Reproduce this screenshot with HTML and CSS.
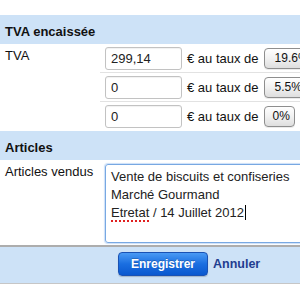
FILE: index.html
```html
<!DOCTYPE html>
<html lang="fr">
<head>
  <meta charset="UTF-8">
  <title>TVA encaissée</title>
  <link rel="stylesheet" href="styles.css">
</head>
<body>
  <form class="form">
    <div class="legend">TVA encaissée</div>
    <div class="row">
      <label class="label">TVA</label>
      <div class="fields">
        <div class="line">
          <input class="amount" type="text" value="299,14">
          <span class="unit">€ au taux de</span>
          <span class="rate">19.6%</span>
        </div>
        <div class="line">
          <input class="amount" type="text" value="0">
          <span class="unit">€ au taux de</span>
          <span class="rate">5.5%</span>
        </div>
        <div class="line">
          <input class="amount" type="text" value="0">
          <span class="unit">€ au taux de</span>
          <span class="rate rate-small">0%</span>
        </div>
      </div>
    </div>
    <div class="legend">Articles</div>
    <div class="row">
      <label class="label">Articles vendus</label>
      <div class="fields fields-text">
        <div class="textarea">Vente de biscuits et confiseries<br>Marché Gourmand<br><span class="typo">Etretat</span> / 14 Juillet 2012<span class="caret"></span></div>
      </div>
    </div>
    <div class="actions">
      <button type="button" class="save">Enregistrer</button>
      <a class="cancel" href="#">Annuler</a>
    </div>
  </form>
</body>
</html>
```

FILE: styles.css
```css
html,
body {
  overflow: hidden;
}

body {
  margin: 0;
  padding-top: 15px;
  background: #fff;
  color: #111;
  font-family: "Liberation Sans", Arial, sans-serif;
  font-size: 13px;
}

.form {
  width: 340px;
}

.legend {
  height: 29px;
  box-sizing: border-box;
  padding: 9px 5px 0;
  line-height: 15px;
  font-weight: bold;
  background: #cde2f7;
}

.row {
  display: flex;
}

.label {
  width: 100px;
  box-sizing: border-box;
  padding: 4px 5px 0;
  line-height: 15px;
}

.fields {
  flex: 1;
}

.line {
  display: flex;
  align-items: center;
  gap: 5px;
  height: 29px;
  box-sizing: border-box;
  padding: 3px 0 2px 5px;
  border-bottom: 1px solid #e2e2e2;
}

.line:last-child {
  border-bottom-color: transparent;
}

.amount {
  width: 77px;
  height: 23px;
  box-sizing: border-box;
  margin: 0;
  padding: 0 5px;
  border: 1px solid #c2c2c2;
  border-radius: 3px;
  box-shadow: inset 0 1px 1px rgba(0, 0, 0, 0.06);
  font: 13px "Liberation Sans", Arial, sans-serif;
  color: #222;
  outline: none;
}

.unit {
  white-space: nowrap;
}

.rate {
  flex: none;
  width: 60px;
  height: 21px;
  box-sizing: border-box;
  padding-left: 10px;
  border: 1px solid #8e8e8e;
  border-radius: 4px;
  background: linear-gradient(#ffffff, #f1f1f1 50%, #dedede);
  box-shadow: 0 1px 0 rgba(0, 0, 0, 0.08);
  font-size: 12px;
  line-height: 19px;
  color: #111;
  white-space: nowrap;
  overflow: hidden;
}

.rate-small {
  width: 31px;
  padding-left: 8px;
}

.fields-text {
  padding: 4px 0 2px 5px;
}

.textarea {
  width: 230px;
  height: 79px;
  box-sizing: border-box;
  padding: 3px 5px;
  border: 1px solid #78a8e2;
  border-radius: 3px;
  box-shadow: 0 0 1px 1px rgba(140, 185, 240, 0.45);
  line-height: 18px;
  color: #222;
  white-space: nowrap;
}

.typo {
  border-bottom: 2px dotted #e02020;
}

.caret {
  display: inline-block;
  width: 1px;
  height: 15px;
  margin-left: 1px;
  vertical-align: -3px;
  background: #000;
}

.actions {
  display: flex;
  align-items: center;
  gap: 5px;
  padding: 5px 0 7px 118px;
  background: #cde2f7;
  border-top: 2px solid #adadad;
  border-bottom: 1px solid #c6c6c6;
}

.save {
  width: 90px;
  height: 24px;
  margin: 0;
  padding: 0;
  border: 1px solid #1a52b4;
  border-radius: 4px;
  background: linear-gradient(#4a9af4, #1a6ee0 50%, #0a58cf);
  box-shadow: 0 1px 1px rgba(0, 0, 0, 0.2);
  color: #fff;
  font: bold 12px "Liberation Sans", Arial, sans-serif;
  text-shadow: 0 -1px 0 rgba(0, 0, 0, 0.2);
  cursor: pointer;
}

.cancel {
  color: #1f3d90;
  font-size: 12.5px;
  font-weight: bold;
  text-decoration: none;
}
```
